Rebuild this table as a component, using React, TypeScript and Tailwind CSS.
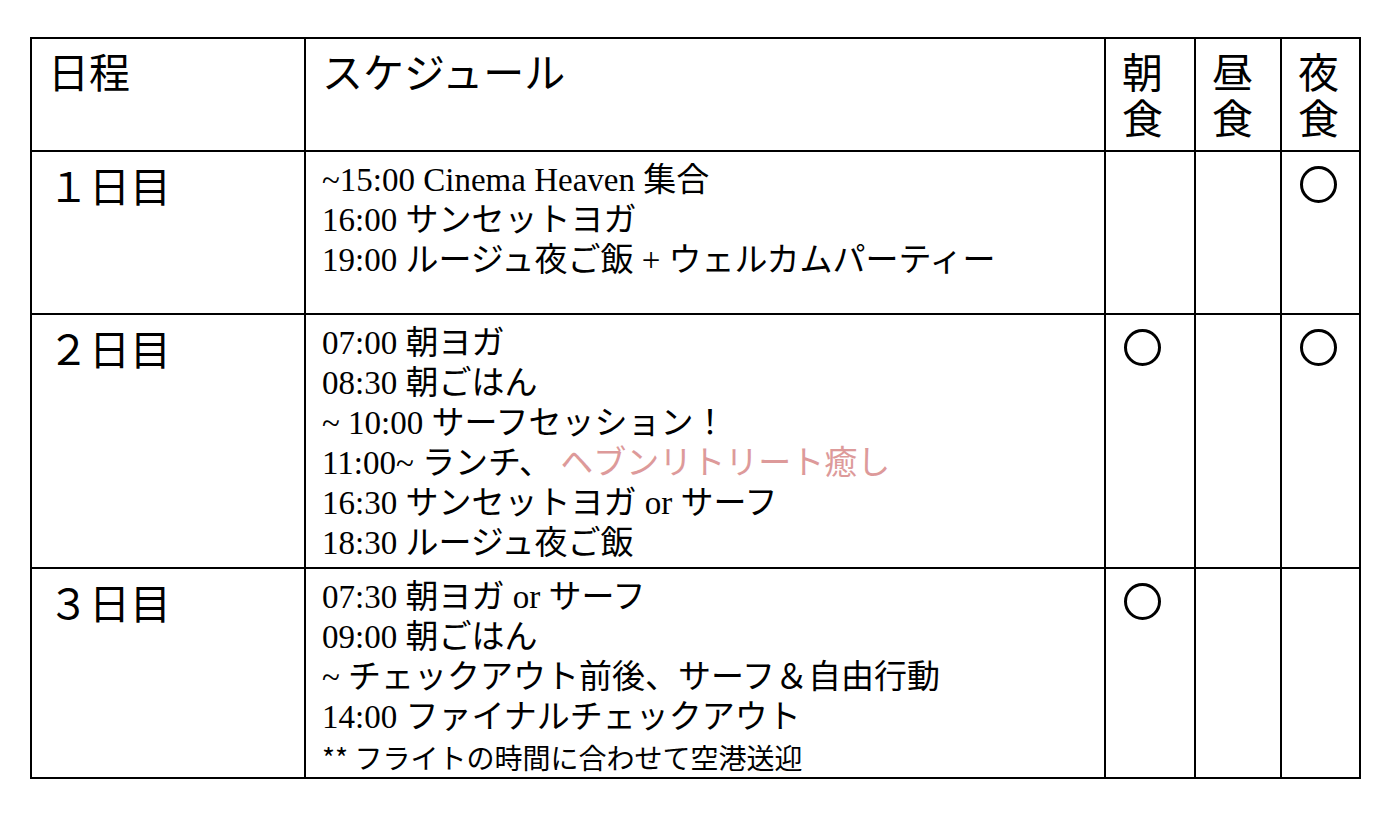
import React from 'react';

const serif = "font-['Liberation_Serif','Noto_Sans_CJK_JP',serif]";
const sans = "font-['Noto_Sans_CJK_JP','Noto_Sans',sans-serif]";

type Day = {
  label: string;
  lines: React.ReactNode[];
  note?: string;
  meals: [boolean, boolean, boolean];
  height: string;
};

const days: Day[] = [
  {
    label: '１日目',
    lines: ['~15:00 Cinema Heaven 集合', '16:00 サンセットヨガ', '19:00 ルージュ夜ご飯 + ウェルカムパーティー'],
    meals: [false, false, true],
    height: 'h-[163px]',
  },
  {
    label: '２日目',
    lines: [
      '07:00 朝ヨガ',
      '08:30 朝ごはん',
      '~ 10:00 サーフセッション！',
      <>
        11:00~ ランチ、 <span className="text-[#dd9a9a]">ヘブンリトリート癒し</span>
      </>,
      '16:30 サンセットヨガ or サーフ',
      '18:30 ルージュ夜ご飯',
    ],
    meals: [true, false, true],
    height: 'h-[254px]',
  },
  {
    label: '３日目',
    lines: ['07:30 朝ヨガ or サーフ', '09:00 朝ごはん', '~ チェックアウト前後、サーフ＆自由行動', '14:00 ファイナルチェックアウト'],
    note: '** フライトの時間に合わせて空港送迎',
    meals: [true, false, false],
    height: 'h-[209px]',
  },
];

// 丸印（食事あり）
const Circle = () => <div className="w-[37px] h-[37px] rounded-full border-[3px] border-black" />;

export default function App() {
  return (
    <div className="min-h-screen bg-white pl-[30px] pt-[37px] text-black">
      <table className="table-fixed border-collapse border-2 border-black w-[1329px]">
        <colgroup>
          <col className="w-[274px]" />
          <col className="w-[800px]" />
          <col className="w-[90px]" />
          <col className="w-[86px]" />
          <col className="w-[79px]" />
        </colgroup>
        <thead>
          <tr className={`h-[113px] ${sans} text-[41px] leading-[46px]`}>
            <th className="border-2 border-black align-top text-left font-normal pl-4 pt-2">日程</th>
            <th className="border-2 border-black align-top text-left font-normal pl-4 pt-2">スケジュール</th>
            <th className="border-2 border-black align-top text-left font-normal pl-4 pt-2">
              <div>朝</div>
              <div>食</div>
            </th>
            <th className="border-2 border-black align-top text-left font-normal pl-4 pt-2">
              <div>昼</div>
              <div>食</div>
            </th>
            <th className="border-2 border-black align-top text-left font-normal pl-4 pt-2">
              <div>夜</div>
              <div>食</div>
            </th>
          </tr>
        </thead>
        <tbody>
          {days.map((d) => (
            <tr key={d.label} className={d.height}>
              <td className={`border-2 border-black align-top pl-4 pt-2 ${sans} text-[41px] leading-[48px]`}>{d.label}</td>
              <td className={`border-2 border-black align-top pl-4 pt-2 ${serif} text-[33px] leading-[40px]`}>
                {d.lines.map((l, i) => (
                  <div key={i}>{l}</div>
                ))}
                {d.note && <div className={`${sans} text-[28px] leading-[40px]`}>{d.note}</div>}
              </td>
              {d.meals.map((m, i) => (
                <td key={i} className="border-2 border-black align-top pl-[18px] pt-[14px]">
                  {m && <Circle />}
                </td>
              ))}
            </tr>
          ))}
        </tbody>
      </table>
    </div>
  );
}
